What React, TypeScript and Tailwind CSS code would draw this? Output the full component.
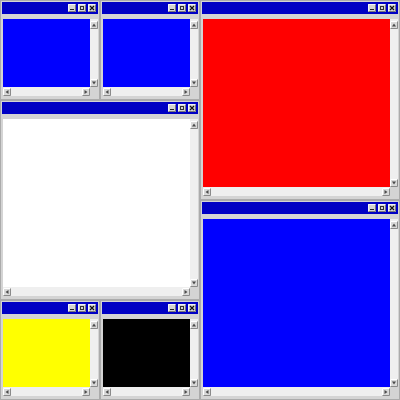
import React from "react";

function Arrow({ dir }: { dir: "up" | "down" | "left" | "right" }) {
  const tri: Record<string, string> = {
    up: "4,2.5 2,5.5 6,5.5",
    down: "2,2.5 6,2.5 4,5.5",
    left: "2.5,4 5.5,2 5.5,6",
    right: "2.5,2 2.5,6 5.5,4",
  };
  return (
    <svg width="8" height="8" viewBox="0 0 8 8" className="block shrink-0">
      <rect x="0" y="0" width="8" height="8" fill="#d9d9d9" />
      <path d="M0.5 7.5 V0.5 H7.5" stroke="#ffffff" fill="none" />
      <path d="M0.5 7.5 H7.5 V0.5" stroke="#8a8a8a" fill="none" />
      <polygon points={tri[dir]} fill="#4a4a4a" />
    </svg>
  );
}

function TitleBtn({ kind }: { kind: "min" | "max" | "close" }) {
  return (
    <svg width="8" height="8" viewBox="0 0 8 8" className="block shrink-0">
      <rect x="0" y="0" width="8" height="8" fill="#d4d4d4" />
      <path d="M0.5 7.5 V0.5 H7.5" stroke="#f4f4f4" fill="none" />
      <path d="M0.5 7.5 H7.5 V0.5" stroke="#7a7a7a" fill="none" />
      {kind === "min" && <path d="M2 5.5 H6" stroke="#222" strokeWidth="1" />}
      {kind === "max" && <rect x="2.5" y="2.5" width="3" height="3" fill="none" stroke="#333" />}
      {kind === "close" && <path d="M2 2 L6 6 M6 2 L2 6" stroke="#111" strokeWidth="1.2" />}
    </svg>
  );
}

function Win({ color, size }: { color: string; size: "s" | "l" }) {
  const dim = size === "s" ? "w-[100px] h-[100px]" : "w-[200px] h-[200px]";
  return (
    <div className={`${dim} flex flex-col bg-[#d4d4d4] border border-[#ababab] p-px shrink-0`}>
      <div className="h-[12px] bg-[#0000c4] flex items-center justify-end gap-[2px] pr-[2px] shrink-0">
        <TitleBtn kind="min" />
        <TitleBtn kind="max" />
        <TitleBtn kind="close" />
      </div>
      <div className="flex-1 mt-[5px] mb-[2px] ml-px flex flex-col min-h-0">
        <div className="flex-1 flex min-h-0">
          <div className="flex-1" style={{ backgroundColor: color }} />
          <div className="w-[8px] bg-[#efefef] flex flex-col justify-between pt-[2px]">
            <Arrow dir="up" />
            <Arrow dir="down" />
          </div>
        </div>
        <div className="h-[9px] flex shrink-0">
          <div className="flex-1 bg-[#efefef] flex items-center justify-between">
            <Arrow dir="left" />
            <Arrow dir="right" />
          </div>
          <div className="w-[8px] bg-[#d4d4d4]" />
        </div>
      </div>
    </div>
  );
}

export default function App() {
  return (
    <div className="w-[400px] h-[400px] flex bg-[#d4d4d4] overflow-hidden">
      <div className="w-[200px] flex flex-col">
        <div className="flex">
          <Win color="#0000ff" size="s" />
          <Win color="#0000ff" size="s" />
        </div>
        <Win color="#ffffff" size="l" />
        <div className="flex">
          <Win color="#ffff00" size="s" />
          <Win color="#000000" size="s" />
        </div>
      </div>
      <div className="w-[200px] flex flex-col">
        <Win color="#ff0000" size="l" />
        <Win color="#0000ff" size="l" />
      </div>
    </div>
  );
}
